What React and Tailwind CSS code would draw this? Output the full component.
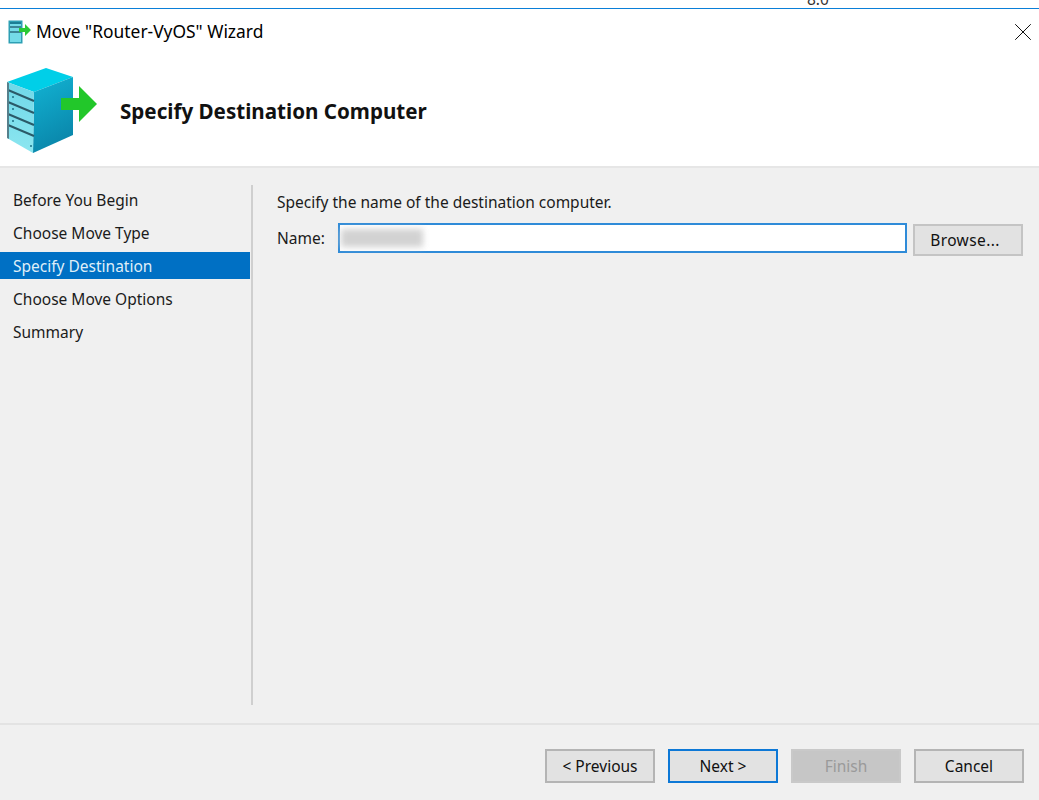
import { X } from 'lucide-react';

const STEPS = ['Before You Begin', 'Choose Move Type', 'Specify Destination', 'Choose Move Options', 'Summary'];

function ServerIcon({ className }) {
  return (
    <svg viewBox="0 0 92 86" className={className}>
      <defs>
        <linearGradient id="side" x1="0" y1="0" x2="0.3" y2="1">
          <stop offset="0" stopColor="#12b4d4" />
          <stop offset="1" stopColor="#0a87ab" />
        </linearGradient>
        <linearGradient id="front" x1="0" y1="0" x2="0" y2="1">
          <stop offset="0" stopColor="#6fd8e8" />
          <stop offset="1" stopColor="#8ce6f0" />
        </linearGradient>
      </defs>
      <path d="M1 14 L40 0 L67 9 L28 24 Z" fill="#00cfe8" />
      <path d="M28 24 L67 9 L67 67 L27 85 Z" fill="url(#side)" />
      <path d="M1 14 L28 24 L27 85 L1 70 Z" fill="url(#front)" />
      <path d="M2 22 L28 33 M2 34 L28 45 M2 46 L28 57 M2 57 L28 68" stroke="#2b5a68" strokeWidth="2" />
      <path d="M1 14 L3 15 L3 71 L1 70 Z" fill="#55808c" />
      <circle cx="7" cy="29" r="1" fill="#1d6f86" />
      <circle cx="7" cy="41" r="1" fill="#1d6f86" />
      <circle cx="7" cy="53" r="1" fill="#1d6f86" />
      <circle cx="25" cy="78" r="1" fill="#1d6f86" />
      <path d="M55 30 L73 30 L73 18 L91 36 L73 54 L73 42 L55 42 Z" fill="#22c72a" />
    </svg>
  );
}

function SmallIcon({ className }) {
  return (
    <svg viewBox="0 0 23 24" className={className}>
      <rect x="0.5" y="0.5" width="14" height="23" fill="#2d9fb4" />
      <rect x="2" y="2" width="11" height="20" fill="#74dbe8" />
      <rect x="2" y="2" width="11" height="2" fill="#1c7f95" />
      <path d="M2 7 H13 M2 12 H13" stroke="#2a6b7c" strokeWidth="1.5" />
      <path d="M11 8 H17 V4 L23 10 L17 16 V12 H11 Z" fill="#2ac936" />
    </svg>
  );
}

function Button({ children, focused, disabled }) {
  return (
    <button
      className={
        disabled
          ? 'w-[110px] h-[34px] pt-[1px] border-2 border-[#c9c9c9] bg-[#c6c6c6] text-[#9a9a9a]'
          : focused
            ? 'w-[110px] h-[34px] pt-[1px] border-2 border-[#0d78d6] bg-[#e2e2e2] text-[#111]'
            : 'w-[110px] h-[34px] pt-[1px] border-2 border-[#b4b4b4] bg-[#e2e2e2] text-[#111]'
      }
    >
      {children}
    </button>
  );
}

export default function App() {
  return (
    <div className="w-[1039px] h-[800px] flex flex-col overflow-hidden bg-white text-[15.5px] text-[#1b1b1b] font-['Noto_Sans',sans-serif]">
      <div className="h-[8px] overflow-hidden pl-[807px] leading-[8px] text-[#333]">
        <span className="block -mt-[9px] leading-[16px]">8.0</span>
      </div>
      <div className="h-[158px] flex flex-col border-t border-[#0a7fd8]">
        <div className="h-[45px] flex items-center pl-[8px] pr-[1px] text-[17.4px] text-black">
          <SmallIcon className="w-[23px] h-[24px]" />
          <span className="ml-[5px] flex-1">Move "Router-VyOS" Wizard</span>
          <X size={30} strokeWidth={0.75} />
        </div>
        <div className="flex items-center pl-[6px] mt-[14px]">
          <ServerIcon className="w-[92px] h-[86px]" />
          <h1 className="ml-[22px] text-[20.6px] font-bold text-[#111] leading-none">Specify Destination Computer</h1>
        </div>
      </div>
      <div className="flex-1 flex flex-col bg-[#f0f0f0] border-t-2 border-[#e6e6e6]">
        <div className="flex-1 flex pt-[17px]">
          <div className="w-[253px] h-[520px] border-r-2 border-[#cfcfcf] pr-[1px]">
            <ul className="pt-[1px]">
              {STEPS.map((step) => (
                <li
                  key={step}
                  className={
                    step === 'Specify Destination'
                      ? 'h-[27px] mb-[6px] pl-[13px] pt-[2px] flex items-center bg-[#0070c4] text-[#dfeef8]'
                      : 'h-[27px] mb-[6px] pl-[13px] pt-[2px] flex items-center'
                  }
                >
                  {step}
                </li>
              ))}
            </ul>
          </div>
          <div className="flex-1 pl-[24px] pr-[16px]">
            <p className="leading-[22px] pt-[6px]">Specify the name of the destination computer.</p>
            <div className="flex items-start mt-[10px]">
              <span className="w-[61px] leading-[30px]">Name:</span>
              <div className="w-[569px] h-[30px] border-2 border-[#2f8bd8] bg-white flex items-center pl-[1px]">
                <div className="w-[82px] h-[18px] bg-[#d2d2d2] blur-[3px]" />
              </div>
              <button className="ml-[6px] mt-[1px] w-[110px] h-[32px] pt-[2px] pr-[6px] border-2 border-[#c4c4c4] bg-[#e2e2e2] text-[#111] tracking-[0.4px]">Browse...</button>
            </div>
          </div>
        </div>
        <div className="h-[77px] border-t-2 border-[#e3e3e3] flex justify-end pt-[24px] pr-[15px] gap-[13px]">
          <Button>&lt; Previous</Button>
          <Button focused>Next &gt;</Button>
          <Button disabled>Finish</Button>
          <Button>Cancel</Button>
        </div>
      </div>
    </div>
  );
}
